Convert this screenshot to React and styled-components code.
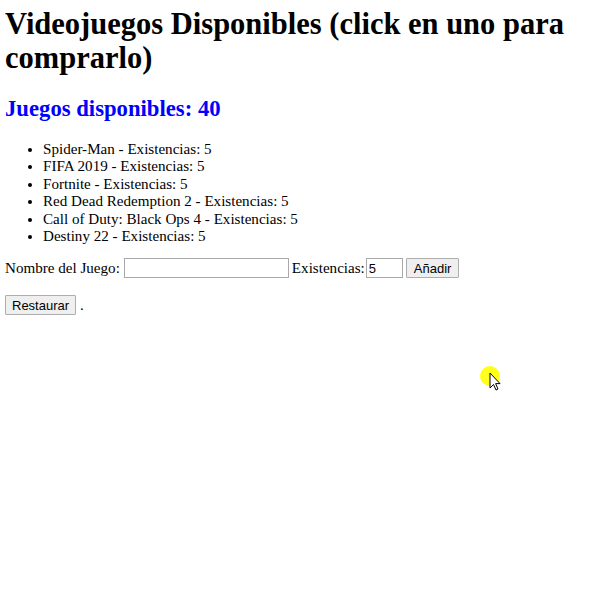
import React from "react";
import styled, { createGlobalStyle } from "styled-components";

const GlobalStyle = createGlobalStyle`
	body {
		margin: 0;
		background: #fff;
		font-family: "Liberation Serif", "Times New Roman", serif;
		color: #000;
	}
`;

const Page = styled.main`
	position: relative;
	min-height: 591px;
	padding: 7px 5px 0;
	box-sizing: border-box;
`;

const Title = styled.h1`
	font-size: 30.5px;
	line-height: 34px;
	margin: 0;
`;

const Count = styled.h2`
	font-size: 22.7px;
	line-height: 26px;
	color: blue;
	margin: 21px 0 0;
`;

const GameList = styled.ul`
	margin: 19px 0 0;
	padding-left: 38px;
	font-size: 15.1px;
	line-height: 17.4px;
	li {
		cursor: pointer;
	}
`;

const FormRow = styled.div`
	margin-top: 13px;
	font-size: 15.1px;
	display: flex;
	align-items: center;
`;

const Label = styled.span`
	margin-right: ${(p) => p.$gap}px;
`;

const Field = styled.input`
	box-sizing: border-box;
	height: 20px;
	width: ${(p) => p.$width}px;
	border: 1px solid #a9a9a9;
	padding: 1px 2px;
	font-family: "Liberation Sans", Arial, sans-serif;
	font-size: 13px;
	margin: 0 3px 0 0;
`;

const Button = styled.button`
	box-sizing: border-box;
	height: 20px;
	padding: 0 ${(p) => p.$pad || 6}px;
	font-family: "Liberation Sans", Arial, sans-serif;
	font-size: 13px;
	color: #000;
	background: #efefef;
	border: 1px solid #adadad;
	border-radius: 1px;
	margin: 0;
`;

const ResetRow = styled.div`
	margin-top: 17px;
	font-size: 15.1px;
	display: flex;
	align-items: center;
	gap: 4px;
`;

const Cursor = styled.div`
	position: absolute;
	left: 479px;
	top: 364px;
	width: 26px;
	height: 30px;
`;

const games = [
	"Spider-Man",
	"FIFA 2019",
	"Fortnite",
	"Red Dead Redemption 2",
	"Call of Duty: Black Ops 4",
	"Destiny 22",
];

export default function App() {
	return (
		<Page>
			<GlobalStyle />
			<Title>Videojuegos Disponibles (click en uno para comprarlo)</Title>
			<Count>Juegos disponibles: 40</Count>
			<GameList>
				{games.map((g) => (
					<li key={g}>{g} - Existencias: 5</li>
				))}
			</GameList>
			<FormRow>
				<Label $gap={4}>Nombre del Juego:</Label>
				<Field $width={165} />
				<Label $gap={1}>Existencias:</Label>
				<Field $width={37} defaultValue="5" />
				<Button $pad={7}>Añadir</Button>
			</FormRow>
			<ResetRow>
				<Button>Restaurar</Button>
				<span>.</span>
			</ResetRow>
			<Cursor>
				<svg width="26" height="30" viewBox="0 0 26 30">
					<circle cx="11" cy="12" r="10" fill="#ffff00" opacity="0.9" />
					<path
						d="M11 9 L11 24 L14.5 20.5 L17 26 L19 25 L16.6 19.6 L21 19.6 Z"
						fill="#fff"
						stroke="#000"
						strokeWidth="1"
						strokeLinejoin="round"
					/>
				</svg>
			</Cursor>
		</Page>
	);
}
